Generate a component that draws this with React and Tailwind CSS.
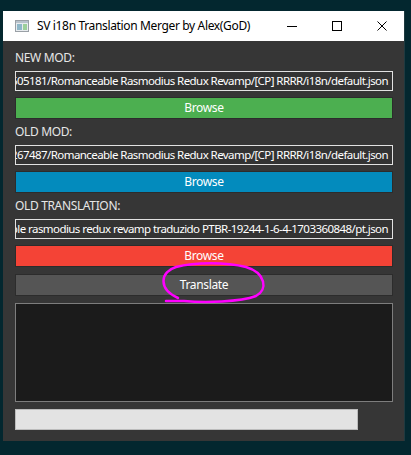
import React from "react";

const font = { fontFamily: '"Noto Sans", "Open Sans", sans-serif' };

function PathField({ text }) {
  return (
    <div className="h-[20px] border border-[#e2e2e2] bg-[#333333] flex justify-end items-center overflow-hidden whitespace-nowrap pr-[4px] text-[11.5px] tracking-[-0.57px] text-white leading-none">
      <span className="shrink-0">{text}</span>
    </div>
  );
}

function Btn({ color, children }) {
  return (
    <div className={`h-[22px] border border-[#2c2c2c] ${color} flex items-center justify-center text-[12px] tracking-[-0.35px] text-white leading-none`}>
      {children}
    </div>
  );
}

function Label({ children }) {
  return <div className="h-[14px] flex items-center text-[12px] tracking-[-0.35px] text-[#e6e6e6] leading-none">{children}</div>;
}

export default function App() {
  return (
    <div className="relative w-[411px] h-[455px] bg-[#03272f] pl-[3px] pt-[11px]" style={font}>
      <div className="w-[402px] border-r border-[#1f3a40]">
        {/* title bar */}
        <div className="h-[30px] bg-white flex items-center">
          <svg width="14" height="12" viewBox="0 0 14 12" className="ml-[12px] mr-[8px]">
            <rect x="0.5" y="0.5" width="13" height="11" fill="#e8ecef" stroke="#9aa0a6" />
            <rect x="1" y="1" width="12" height="2" fill="#b8c2cc" />
            <rect x="2" y="4" width="5" height="6" fill="#8fb7c9" />
            <rect x="8" y="4" width="4" height="6" fill="#9ccf9a" />
          </svg>
          <span className="text-[12px] tracking-[-0.35px] text-black leading-none">SV i18n Translation Merger by Alex(GoD)</span>
          <div className="ml-auto flex items-center h-full">
            <div className="w-[45px] h-full flex items-center justify-center">
              <div className="w-[10px] h-[1px] bg-black" />
            </div>
            <div className="w-[45px] h-full flex items-center justify-center">
              <div className="w-[10px] h-[10px] border border-black" />
            </div>
            <div className="w-[45px] h-full flex items-center justify-center">
              <svg width="10" height="10" viewBox="0 0 10 10">
                <path d="M0.5 0.5 L9.5 9.5 M9.5 0.5 L0.5 9.5" stroke="#000" strokeWidth="1" />
              </svg>
            </div>
          </div>
        </div>
        {/* content */}
        <div className="bg-[#363636] pl-[12px] pr-[11px] pt-[10px] pb-[11px] flex flex-col">
          <Label>NEW MOD:</Label>
          <div className="mt-[6px]">
            <PathField text="C:/Users/Alex/Downloads/Romanceable Rasmodius Redux Revamp-1605181/Romanceable Rasmodius Redux Revamp/[CP] RRRR/i18n/default.json" />
          </div>
          <div className="mt-[6px]">
            <Btn color="bg-[#4caf50]">Browse</Btn>
          </div>
          <div className="mt-[6px]">
            <Label>OLD MOD:</Label>
          </div>
          <div className="mt-[6px]">
            <PathField text="C:/Users/Alex/Downloads/Romanceable Rasmodius Redux Revamp-1267487/Romanceable Rasmodius Redux Revamp/[CP] RRRR/i18n/default.json" />
          </div>
          <div className="mt-[6px]">
            <Btn color="bg-[#038bbd]">Browse</Btn>
          </div>
          <div className="mt-[6px]">
            <Label>OLD TRANSLATION:</Label>
          </div>
          <div className="mt-[6px]">
            <PathField text="C:/Users/Alex/Downloads/romanceable rasmodius redux revamp traduzido PTBR-19244-1-6-4-1703360848/pt.json" />
          </div>
          <div className="mt-[6px]">
            <Btn color="bg-[#f44336]">Browse</Btn>
          </div>
          <div className="mt-[7px]">
            <Btn color="bg-[#555555]">Translate</Btn>
          </div>
          <div className="mt-[7px] h-[99px] bg-[#1b1b1b] border border-[#7d7d7d]" />
          <div className="mt-[7px] flex">
            <div className="w-[343px] h-[21px] bg-[#e3e3e3] border border-[#bcbcbc]" />
          </div>
        </div>
      </div>
      <svg className="absolute inset-0 pointer-events-none" width="411" height="455" viewBox="0 0 411 455">
        <path
          d="M166 301 L184 301 C205 303 240 302 256 296 C268 290 266 273 246 267 C226 262 195 262 176 267 C160 272 158 289 178 298"
          fill="none"
          stroke="#ff00ff"
          strokeWidth="2.5"
          strokeLinecap="round"
        />
      </svg>
    </div>
  );
}
